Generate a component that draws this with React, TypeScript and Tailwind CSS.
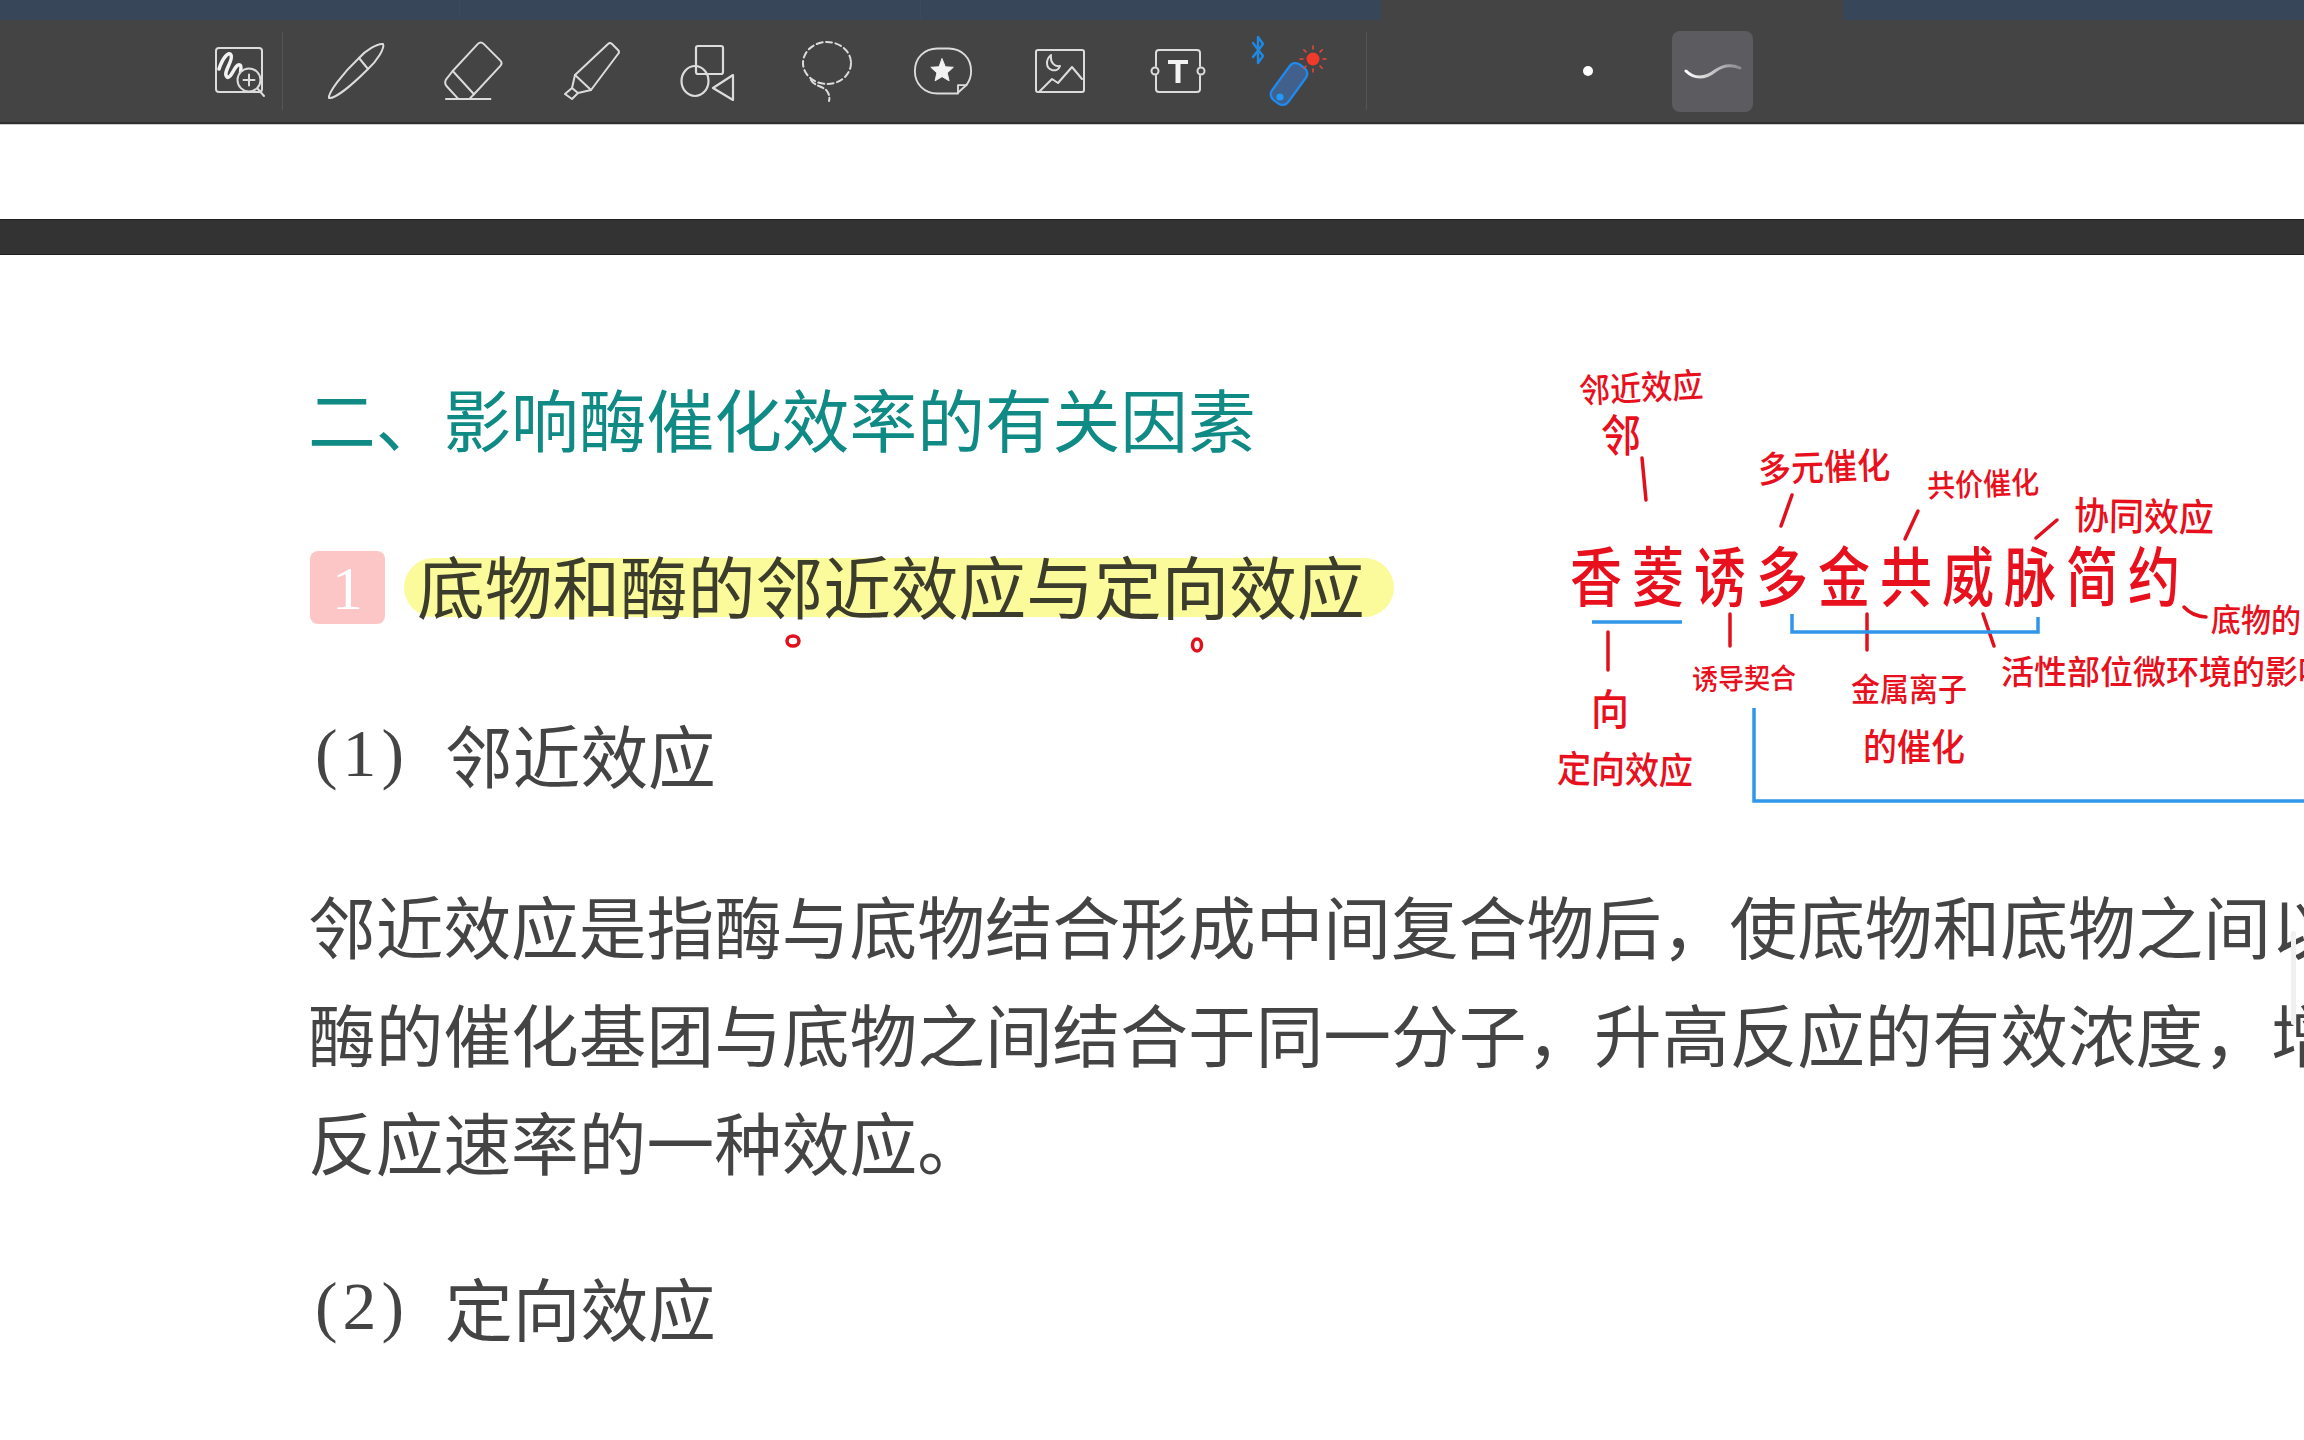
const ICON = '#dcdcdc'

function ZoomInk() {
  return (
    <svg width="56" height="56" viewBox="0 0 56 56" fill="none" stroke={ICON} strokeWidth="2" strokeLinecap="round" strokeLinejoin="round">
      <rect x="3" y="5" width="46" height="44" rx="3" />
      <path d="M6 26C10 14 16 8 18 12C21 17 9 30 14 34C18 37 22 20 27 22C30 24 25 32 29 33" strokeWidth="3.5" stroke="#f2f2f2" />
      <circle cx="36" cy="37" r="11.5" fill="#444444" />
      <path d="M36 31.5V42.5M30.5 37H41.5M44.5 45.5L51 53" />
    </svg>
  )
}

function Pen() {
  return (
    <svg width="60" height="60" viewBox="0 0 60 60" fill="none" stroke={ICON} strokeWidth="2" strokeLinecap="round" strokeLinejoin="round">
      <path d="M3 57C2 52 16 33 33 17L42 28C26 44 9 58 3 57Z" />
      <path d="M33 17C40 9 52 2 57 3C59 7 51 20 42 28" />
    </svg>
  )
}

function Eraser() {
  return (
    <svg width="62" height="62" viewBox="0 0 62 62" fill="none" stroke={ICON} strokeWidth="2" strokeLinecap="round" strokeLinejoin="round">
      <path d="M35 3Q38 0 41 3L58 20Q61 23 58 26L31 55L9 31Z" />
      <path d="M9 31L2 40Q0 44 3 47L15 60M31 55L26 60M2 60H48" />
    </svg>
  )
}

function Marker() {
  return (
    <svg width="56" height="58" viewBox="0 0 56 58" fill="none" stroke={ICON} strokeWidth="2" strokeLinecap="round" strokeLinejoin="round">
      <path d="M44 2Q46 0 48 2L54 8Q56 10 54 12L27 48L11 33Z" />
      <path d="M11 33L8 46L1 52L8 57L14 51L27 48M8 46L14 51" />
    </svg>
  )
}

function Shapes() {
  return (
    <svg width="56" height="60" viewBox="0 0 56 60" fill="none" stroke={ICON} strokeWidth="2.2" strokeLinecap="round" strokeLinejoin="round">
      <rect x="16" y="5" width="27" height="28" rx="2" />
      <ellipse cx="15" cy="40" rx="13.5" ry="15" />
      <path d="M53 34L33 47L53 59Z" />
    </svg>
  )
}

function Lasso() {
  return (
    <svg width="52" height="62" viewBox="0 0 52 62" fill="none" stroke={ICON} strokeWidth="2" strokeLinecap="round" strokeLinejoin="round">
      <ellipse cx="26" cy="23" rx="24" ry="21" strokeDasharray="6 3.5" />
      <path d="M10 40C13 46 22 46 26 51C28 54 29 57 28 61" strokeDasharray="6 3" />
    </svg>
  )
}

function Sticker() {
  return (
    <svg width="64" height="54" viewBox="0 0 64 54" fill="none" stroke={ICON} strokeWidth="2" strokeLinecap="round" strokeLinejoin="round">
      <path d="M26 3H38C52 3 62 13 62 27C62 33 60 38 57 42L47 51H26C12 51 2 41 2 27C2 13 12 3 26 3Z" />
      <path d="M57 42H48V51" />
      <path d="M31 14L34.5 22.5L43 23L36.5 29L38.5 37.5L31 33L23.5 37.5L25.5 29L19 23L27.5 22.5Z" fill="#f2f2f2" stroke="#f2f2f2" strokeWidth="1" />
    </svg>
  )
}

function Picture() {
  return (
    <svg width="52" height="46" viewBox="0 0 52 46" fill="none" stroke={ICON} strokeWidth="2" strokeLinecap="round" strokeLinejoin="round">
      <rect x="2" y="2" width="48" height="42" rx="2" />
      <path d="M17 7C12 11 11 20 18 22C22 23 25 21 26 18C21 19 16 15 17 7Z" />
      <path d="M6 43L18 31L24 35L38 19L48 31" />
    </svg>
  )
}

function TextBox() {
  return (
    <svg width="56" height="46" viewBox="0 0 56 46" fill="none" stroke={ICON} strokeWidth="2" strokeLinecap="round" strokeLinejoin="round">
      <path d="M6 18V5Q6 2 9 2H47Q50 2 50 5V18M6 28V41Q6 44 9 44H47Q50 44 50 41V28" />
      <circle cx="5" cy="23" r="3.5" />
      <circle cx="51" cy="23" r="3.5" />
      <path d="M18 12H38V16H30.5V35H25.5V16H18Z" fill="#f2f2f2" stroke="none" />
    </svg>
  )
}

function Laser() {
  const rays = [0, 45, 90, 135, 180, 225, 270, 315]
  return (
    <svg width="85" height="78" viewBox="0 0 85 78" fill="none" strokeLinecap="round" strokeLinejoin="round">
      <path d="M7 11L17 24L12 31V5L17 12L7 25" stroke="#1e88e5" strokeWidth="2.4" />
      <rect x="33" y="30" width="20" height="44" rx="7" transform="rotate(36 43 52)" fill="#41608c" stroke="#1f8bf0" strokeWidth="2.2" />
      <circle cx="34" cy="65" r="3.6" fill="#1f9bff" />
      <circle cx="67" cy="27" r="6.5" fill="#f23a2c" />
      {rays.map(a => (
        <line key={a} x1="67" y1="17" x2="67" y2="14" stroke="#e2483c" strokeWidth="1.6" transform={`rotate(${a} 67 27)`} />
      ))}
    </svg>
  )
}

function Toolbar() {
  return (
    <div className="flex h-[102px] items-center bg-[#444444] pl-[213px]">
      <div className="flex w-[56px] justify-center"><ZoomInk /></div>
      <div className="ml-[13px] h-[78px] w-px bg-[#555555]" />
      <div className="ml-[43px] flex w-[60px] justify-center"><Pen /></div>
      <div className="ml-[58px] flex w-[60px] justify-center"><Eraser /></div>
      <div className="ml-[58px] flex w-[60px] justify-center"><Marker /></div>
      <div className="ml-[56px] flex w-[60px] justify-center"><Shapes /></div>
      <div className="ml-[59px] flex w-[60px] justify-center"><Lasso /></div>
      <div className="ml-[56px] flex w-[60px] justify-center"><Sticker /></div>
      <div className="ml-[57px] flex w-[60px] justify-center"><Picture /></div>
      <div className="ml-[58px] flex w-[60px] justify-center"><TextBox /></div>
      <div className="ml-[38px] flex w-[85px] justify-center"><Laser /></div>
      <div className="ml-[35px] h-[78px] w-px bg-[#555555]" />
      <div className="ml-[216px] h-[10px] w-[10px] rounded-full bg-white" />
      <div className="ml-[79px] flex h-[81px] w-[81px] items-center justify-center rounded-lg bg-[#5c5c60]">
        <svg width="58" height="22" viewBox="0 0 58 22" fill="none">
          <defs>
            <linearGradient id="stroke-fade" x1="0" y1="0" x2="1" y2="0">
              <stop offset="0" stopColor="#ffffff" />
              <stop offset="1" stopColor="#8a8a8e" />
            </linearGradient>
          </defs>
          <path d="M2 11C10 19 21 19 31 11C39 5 47 4 56 8" stroke="url(#stroke-fade)" strokeWidth="3" strokeLinecap="round" />
        </svg>
      </div>
    </div>
  )
}

const notes = [
  { text: '邻近效应', cls: 'left-[1579px] top-[370px] text-[31px] -rotate-3 scale-y-110' },
  { text: '邻', cls: 'left-[1601px] top-[413px] text-[40px] scale-y-110' },
  { text: '多元催化', cls: 'left-[1758px] top-[449px] text-[33px] -rotate-2 scale-y-110' },
  { text: '共价催化', cls: 'left-[1927px] top-[468px] text-[28px] -rotate-2 scale-y-110' },
  { text: '协同效应', cls: 'left-[2074px] top-[496px] text-[35px] rotate-1 scale-y-110' },
  { text: '香菱诱多金共威脉简约', cls: 'left-[1570px] top-[547px] text-[52px] tracking-[10px] scale-y-125' },
  { text: '底物的', cls: 'left-[2211px] top-[603px] text-[30px] rotate-1 scale-y-110' },
  { text: '向', cls: 'left-[1591px] top-[688px] text-[38px] scale-y-110' },
  { text: '定向效应', cls: 'left-[1557px] top-[751px] text-[34px] rotate-1 scale-y-110' },
  { text: '诱导契合', cls: 'left-[1692px] top-[664px] text-[26px] -rotate-1 scale-y-110' },
  { text: '金属离子', cls: 'left-[1851px] top-[673px] text-[29px] scale-y-110' },
  { text: '的催化', cls: 'left-[1863px] top-[729px] text-[34px] scale-y-110' },
  { text: '活性部位微环境的影响', cls: 'left-[2001px] top-[654px] text-[33px]' },
]

// handwriting layer sits on top of the page, coordinates are the page's own
function Annotations() {
  return (
    <div className="pointer-events-none absolute inset-0 overflow-hidden">
      <svg width="2304" height="1440" viewBox="0 0 2304 1440" fill="none" className="absolute left-0 top-0" strokeLinecap="round">
        <g stroke="#e0101c" strokeWidth="3.5">
          <path d="M1642 458L1646 500" />
          <path d="M1792 495L1781 526" />
          <path d="M1918 511L1905 539" />
          <path d="M2057 520L2036 538" />
          <path d="M2184 607Q2192 616 2206 617" />
          <path d="M1608 632L1608 670" />
          <path d="M1730 614L1730 646" />
          <path d="M1867 614L1867 650" />
          <path d="M1983 614L1994 646" />
          <ellipse cx="793" cy="641" rx="6" ry="5" />
          <ellipse cx="1197" cy="645" rx="4.5" ry="6" />
        </g>
        <g stroke="#2f96ea" strokeWidth="3.5" strokeLinecap="butt" strokeLinejoin="miter">
          <path d="M1592 622H1682" />
          <path d="M1792 614V632H2038V617" />
          <path d="M1754 708V801H2304" />
        </g>
      </svg>
      {notes.map(n => (
        <span key={n.text} className={`absolute whitespace-nowrap font-medium leading-none text-[#e8101c] ${n.cls}`}>{n.text}</span>
      ))}
    </div>
  )
}

export default function App() {
  return (
    <div className="relative h-[1440px] w-[2304px] overflow-hidden bg-white font-['Noto_Sans_CJK_SC','Noto_Sans',sans-serif]">
      <div className="flex h-[20px] bg-[#444444]">
        <div className="w-[460px] border-r border-[#3e4a5c] bg-[#384659]" />
        <div className="w-[461px] border-r border-[#3e4a5c] bg-[#384659]" />
        <div className="w-[460px] bg-[#384659]" />
        <div className="flex-1" />
        <div className="w-[461px] bg-[#384659]" />
      </div>
      <Toolbar />
      <div className="h-[2px] bg-[#2e2e2e]" />
      <div className="h-[95px] border-t border-[#cccccc] bg-white" />
      <div className="h-[36px] border-y border-[#1f1f1f] bg-[#333333]" />

      <div className="pl-[308px] pt-[109px] whitespace-nowrap text-[67.7px] leading-[107px] text-[#444444]">
        <h2 className="font-normal text-[#0f8a84]">二、影响酶催化效率的有关因素</h2>

        <div className="ml-[2px] mt-[63px] flex h-[107px] items-center">
          <div className="flex h-[73px] w-[75px] items-center justify-center rounded-lg bg-[#fdc6c6] font-['Liberation_Serif',serif] text-[62px] leading-none text-white">1</div>
          <div className="ml-[19px] flex h-[59px] items-center rounded-full bg-[#fbfb9c] pb-[6px] pl-[13px] pr-[29px] leading-[53px] text-[#3c3c2c]">底物和酶的邻近效应与定向效应</div>
        </div>

        <div className="mt-[59px] flex">
          <span className="w-[137px] pl-[7px] font-['Liberation_Serif',serif] tracking-[5px]">(1)</span>
          <span>邻近效应</span>
        </div>

        <div className="mt-[63px] leading-[108px]">
          <p>邻近效应是指酶与底物结合形成中间复合物后，使底物和底物之间以</p>
          <p>酶的催化基团与底物之间结合于同一分子，升高反应的有效浓度，增</p>
          <p>反应速率的一种效应。</p>
        </div>

        <div className="mt-[59px] flex">
          <span className="w-[137px] pl-[7px] font-['Liberation_Serif',serif] tracking-[5px]">(2)</span>
          <span>定向效应</span>
        </div>
      </div>

      <Annotations />
      <div className="absolute left-[2291px] top-[931px] h-[94px] w-[5px] rounded-full bg-[#f1f1f1]" />
    </div>
  )
}
